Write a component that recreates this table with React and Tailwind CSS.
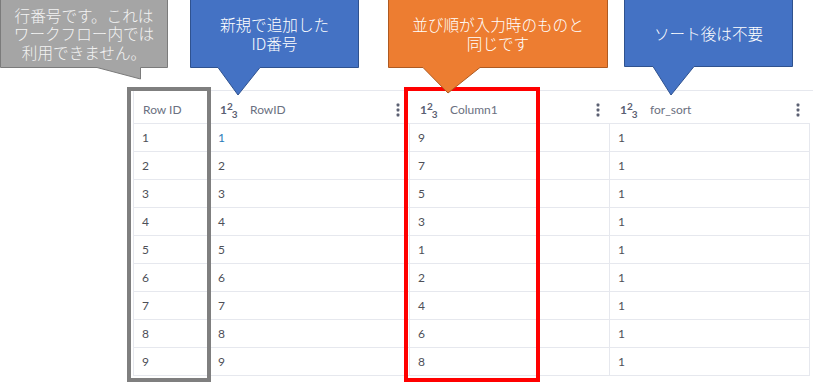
import React from "react";

const rows = [
  [1, 1, 9, 1],
  [2, 2, 7, 1],
  [3, 3, 5, 1],
  [4, 4, 3, 1],
  [5, 5, 1, 1],
  [6, 6, 2, 1],
  [7, 7, 4, 1],
  [8, 8, 6, 1],
  [9, 9, 8, 1],
];

// callout shapes (page coordinates)
const callouts = [
  {
    left: 0,
    width: 168,
    fill: "#a5a5a5",
    stroke: "#7b7b7b",
    path: "M0.5,-1 H167.5 V67.5 H140.5 V79 L97,67.5 H0.5 Z",
    lines: ["行番号です。これは", "ワークフロー内では", "利用できません。"],
    text: "text-[#f4f4f4]",
  },
  {
    left: 190,
    width: 169,
    fill: "#4472c4",
    stroke: "#2f528f",
    path: "M0.5,-1 H168.5 V67.5 H70 L48,95 L28,67.5 H0.5 Z",
    lines: ["新規で追加した", "ID番号"],
    text: "text-white",
  },
  {
    left: 388,
    width: 220,
    fill: "#ed7d31",
    stroke: "#ae5a21",
    path: "M0.5,-1 H219.5 V67.5 H92 L60,93 L35,67.5 H0.5 Z",
    lines: ["並び順が入力時のものと", "同じです"],
    text: "text-white",
  },
  {
    left: 624,
    width: 169,
    fill: "#4472c4",
    stroke: "#2f528f",
    path: "M0.5,-1 H168.5 V66.5 H70 L47,95 L29,66.5 H0.5 Z",
    lines: ["ソート後は不要"],
    text: "text-white",
  },
];

const NumIcon = () => (
  <span className="inline-flex items-center font-bold text-[#5b6072] text-[12px] leading-none mr-[14px] w-[16px]">
    <span>1</span>
    <span className="relative -top-[4px] text-[10px]">2</span>
    <span className="relative top-[4px] -ml-[1px] text-[10px]">3</span>
  </span>
);

const Kebab = () => (
  <svg width="4" height="14" viewBox="0 0 4 14" className="ml-auto">
    <rect x="0.6" y="0.6" width="2.8" height="2.8" rx="0.6" fill="#5b6072" />
    <rect x="0.6" y="5.6" width="2.8" height="2.8" rx="0.6" fill="#5b6072" />
    <rect x="0.6" y="10.6" width="2.8" height="2.8" rx="0.6" fill="#5b6072" />
  </svg>
);

export default function App() {
  return (
    <div className="relative w-[813px] h-[383px] overflow-hidden bg-white font-['Lato','Liberation_Sans',sans-serif]">
      {/* data table */}
      <div className="pt-[90px] pl-[133px]">
        <div className="grid grid-cols-[77px_200px_200px_200px] border-t border-[#e6e8ee] text-[12px]">
          {/* header */}
          <div className="h-[33px] pt-[5px] pl-[9px] flex items-center border-b border-l border-[#e6e8ee] text-[#6b7081]">
            Row ID
          </div>
          {["RowID", "Column1", "for_sort"].map((h) => (
            <div
              key={h}
              className="h-[33px] pt-[5px] pl-[10px] pr-[10px] flex items-center border-b border-[#e6e8ee] text-[#6b7081]"
            >
              <NumIcon />
              <span>{h}</span>
              <Kebab />
            </div>
          ))}
          {/* rows */}
          {rows.map((r, i) =>
            r.map((v, j) => (
              <div
                key={i + "-" + j}
                className={
                  "h-[28px] flex items-center pl-[8px] border-b border-r border-[#e6e8ee] " +
                  (j === 0 ? "border-l " : "") +
                  (i === 0 && j === 1 ? "text-[#2b7bb9]" : "text-[#4e5058]")
                }
              >
                {v}
              </div>
            ))
          )}
        </div>
      </div>

      {/* highlight frames */}
      <div className="absolute left-[127px] top-[87px] w-[84px] h-[295px] border-4 border-[#7f7f7f]" />
      <div className="absolute left-[404px] top-[87px] w-[136px] h-[295px] border-4 border-[#ff0000]" />

      {/* callouts */}
      {callouts.map((c, i) => (
        <div
          key={i}
          className="absolute top-0 h-[96px]"
          style={{ left: c.left, width: c.width }}
        >
          <svg width={c.width} height="96" className="absolute inset-0">
            <path d={c.path} fill={c.fill} stroke={c.stroke} strokeWidth="1" />
          </svg>
          <div
            className={
              "relative h-[67px] flex flex-col items-center justify-center text-[15.6px] leading-[19px] font-light font-['Noto_Sans_CJK_JP','Noto_Sans',sans-serif] " +
              c.text
            }
          >
            {c.lines.map((l) => (
              <div key={l} className="leading-[18.5px]">{l}</div>
            ))}
          </div>
        </div>
      ))}
    </div>
  );
}
